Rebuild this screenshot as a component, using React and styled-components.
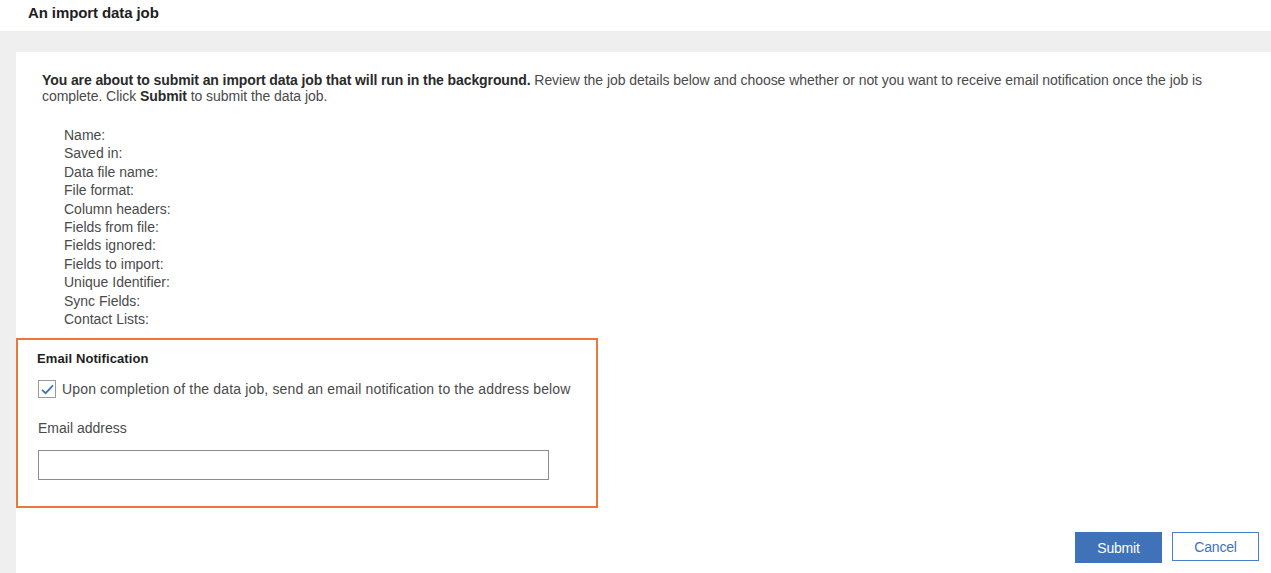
import React, { useState } from "react";
import styled, { createGlobalStyle } from "styled-components";

const GlobalStyle = createGlobalStyle`
  html, body {
    margin: 0;
    padding: 0;
    background: #fff;
    font-family: "Liberation Sans", Arial, sans-serif;
    color: #333;
  }
`;

const details = [
  "Name:",
  "Saved in:",
  "Data file name:",
  "File format:",
  "Column headers:",
  "Fields from file:",
  "Fields ignored:",
  "Fields to import:",
  "Unique Identifier:",
  "Sync Fields:",
  "Contact Lists:",
];

const App = () => {
  const [notify, setNotify] = useState(true);
  const [email, setEmail] = useState("");

  return (
    <>
      <GlobalStyle />
      <Page>
        <Header>
          <Title>An import data job</Title>
        </Header>
        <Body>
          <Panel>
            <Intro>
              <strong>
                You are about to submit an import data job that will run in the
                background.
              </strong>{" "}
              Review the job details below and choose whether or not you want to
              receive email notification once the job is complete. Click{" "}
              <strong>Submit</strong> to submit the data job.
            </Intro>
            <DetailList>
              {details.map((d) => (
                <DetailItem key={d}>{d}</DetailItem>
              ))}
            </DetailList>
            <NotifyBox>
              <NotifyTitle>Email Notification</NotifyTitle>
              <CheckRow>
                <CheckBox
                  checked={notify}
                  onClick={() => setNotify(!notify)}
                  role="checkbox"
                  aria-checked={notify}
                >
                  {notify && (
                    <svg width="13" height="11" viewBox="0 0 13 11">
                      <path
                        d="M1 5.8 L4.6 9.2 L12 1.4"
                        fill="none"
                        stroke="#3d72b8"
                        strokeWidth="1.7"
                      />
                    </svg>
                  )}
                </CheckBox>
                <CheckLabel>
                  Upon completion of the data job, send an email notification to
                  the address below
                </CheckLabel>
              </CheckRow>
              <FieldLabel>Email address</FieldLabel>
              <TextInput
                value={email}
                onChange={(e) => setEmail(e.target.value)}
              />
            </NotifyBox>
            <Actions>
              <Button primary>Submit</Button>
              <Button>Cancel</Button>
            </Actions>
          </Panel>
        </Body>
      </Page>
    </>
  );
};

export default App;

const Page = styled.div`
  display: flex;
  flex-direction: column;
  height: 573px;
  overflow: hidden;
`;

const Header = styled.div`
  height: 31px;
  display: flex;
  align-items: center;
  padding: 0 28px;
  background: #fff;
`;

const Title = styled.h1`
  margin: -6px 0 0 0;
  font-size: 15px;
  font-weight: 700;
  color: #1e1e1e;
  letter-spacing: -0.1px;
`;

const Body = styled.div`
  flex: 1;
  background: #efefef;
  padding: 21px 0 0 16px;
  display: flex;
`;

const Panel = styled.div`
  flex: 1;
  background: #fff;
  padding: 20px 0 0 0;
  display: flex;
  flex-direction: column;
`;

const Intro = styled.p`
  margin: 0 0 0 26px;
  padding-right: 64px;
  font-size: 14px;
  line-height: 16px;
  color: #4a4a4a;
  letter-spacing: -0.05px;

  strong {
    color: #2a2a2a;
    font-weight: 700;
    letter-spacing: -0.1px;
  }
`;

const DetailList = styled.ul`
  list-style: none;
  margin: 22px 0 0 48px;
  padding: 0;
`;

const DetailItem = styled.li`
  font-size: 14px;
  line-height: 18.4px;
  color: #4a4a4a;
`;

const NotifyBox = styled.div`
  width: 582px;
  box-sizing: border-box;
  border: 2px solid #e8793a;
  margin-top: 10px;
  padding: 11px 0 26px 19px;
  display: flex;
  flex-direction: column;
`;

const NotifyTitle = styled.div`
  font-size: 13px;
  font-weight: 700;
  color: #1e1e1e;
  letter-spacing: 0.1px;
  line-height: 16px;
`;

const CheckRow = styled.div`
  display: flex;
  align-items: center;
  gap: 6px;
  margin-top: 13px;
  padding-left: 1px;
`;

const CheckBox = styled.div`
  width: 18px;
  height: 18px;
  box-sizing: border-box;
  border: 1px solid #9a9a9a;
  background: #fff;
  display: flex;
  align-items: center;
  justify-content: center;
  cursor: pointer;
`;

const CheckLabel = styled.span`
  font-size: 14px;
  color: #4a4a4a;
  letter-spacing: 0.15px;
`;

const FieldLabel = styled.div`
  margin-top: 22px;
  padding-left: 1px;
  font-size: 14px;
  line-height: 16px;
  color: #4a4a4a;
`;

const TextInput = styled.input`
  margin-top: 14px;
  margin-left: 1px;
  width: 511px;
  height: 30px;
  box-sizing: border-box;
  border: 1px solid #8c8c8c;
  outline: none;
  font-family: inherit;
  font-size: 13px;
  padding: 0 6px;
`;

const Actions = styled.div`
  display: flex;
  justify-content: flex-end;
  gap: 10px;
  margin-top: 24px;
  padding-right: 12px;
`;

const Button = styled.button`
  width: 87px;
  height: ${(p) => (p.primary ? "31px" : "29px")};
  box-sizing: border-box;
  font-family: inherit;
  font-size: 14px;
  letter-spacing: -0.2px;
  cursor: pointer;
  border: 1px solid ${(p) => (p.primary ? "#3f72b9" : "#4a80c8")};
  background: ${(p) => (p.primary ? "#3f72b9" : "#fff")};
  color: ${(p) => (p.primary ? "#fff" : "#3f72b9")};
  align-self: flex-start;
`;
